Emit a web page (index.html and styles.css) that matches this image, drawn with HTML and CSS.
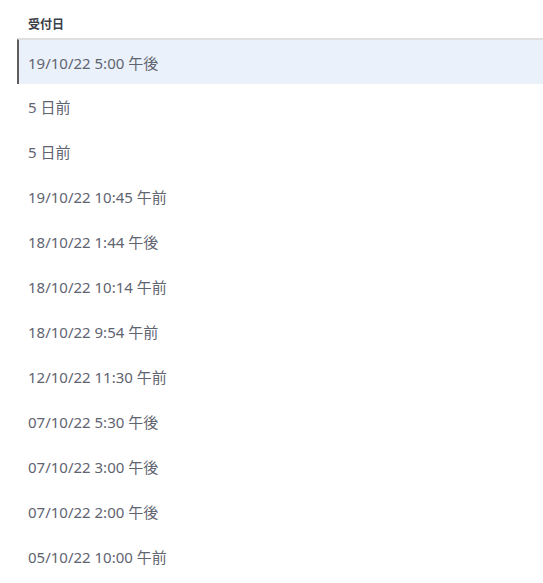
FILE: index.html
```html
<!DOCTYPE html>
<html lang="ja">
<head>
<meta charset="utf-8">
<link rel="stylesheet" href="styles.css">
</head>
<body>
<div class="grid">
  <div class="header"><span class="header-label">受付日</span></div>
  <div class="row selected"><span class="cell">19/10/22 5:00 午後</span></div>
  <div class="row"><span class="cell">5 日前</span></div>
  <div class="row"><span class="cell">5 日前</span></div>
  <div class="row"><span class="cell">19/10/22 10:45 午前</span></div>
  <div class="row"><span class="cell">18/10/22 1:44 午後</span></div>
  <div class="row"><span class="cell">18/10/22 10:14 午前</span></div>
  <div class="row"><span class="cell">18/10/22 9:54 午前</span></div>
  <div class="row"><span class="cell">12/10/22 11:30 午前</span></div>
  <div class="row"><span class="cell">07/10/22 5:30 午後</span></div>
  <div class="row"><span class="cell">07/10/22 3:00 午後</span></div>
  <div class="row"><span class="cell">07/10/22 2:00 午後</span></div>
  <div class="row"><span class="cell">05/10/22 10:00 午前</span></div>
</div>
</body>
</html>
```
FILE: styles.css
```css
html, body {
  margin: 0;
  padding: 0;
  background: #ffffff;
}
body {
  font-family: "Noto Sans", "Noto Sans CJK JP", sans-serif;
  color: #5f6471;
  overflow: hidden;
}
.grid {
  display: flex;
  flex-direction: column;
  margin-left: 17px;
}
.header {
  height: 39px;
  display: flex;
  align-items: center;
  padding-left: 11px;
  border-bottom: 1px solid #e1dfdd;
  box-sizing: border-box;
  padding-top: 9px;
}
.header-label {
  font-size: 12px;
  font-weight: 700;
  color: #3b3f4a;
}
.row {
  height: 45px;
  display: flex;
  align-items: center;
  box-sizing: border-box;
  border-left: 2px solid transparent;
  padding-left: 9px;
}
.row.selected {
  background: #eaf1fa;
  border-left-color: #605e5c;
  border-top: 1px solid #e1dfdd;
}
.cell {
  font-size: 15px;
}
```
